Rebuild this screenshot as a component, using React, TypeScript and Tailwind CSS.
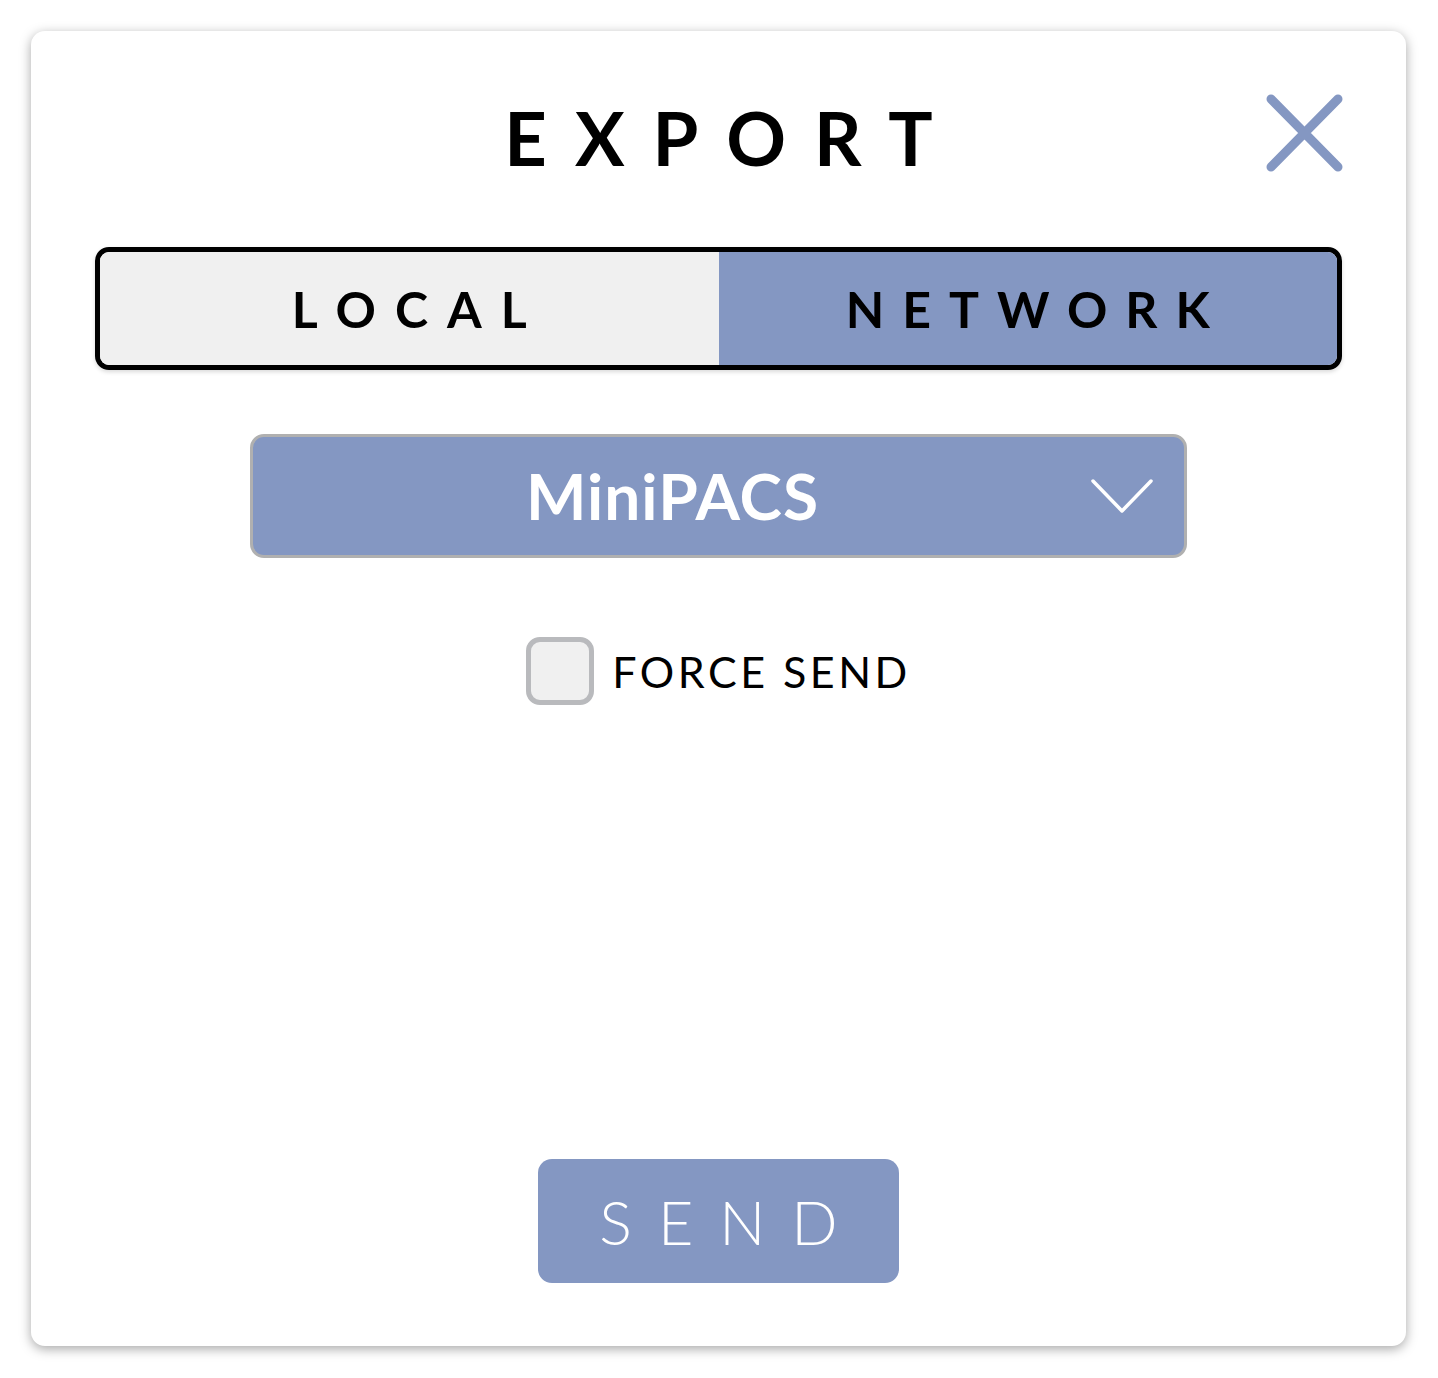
import { useState } from 'react';

const font = { fontFamily: 'Lato, "Noto Sans", sans-serif' };

function CloseIcon() {
  return (
    <svg width="80" height="82" viewBox="0 0 80 82" fill="none">
      <path d="M7 7 L74 75 M74 7 L7 75" stroke="#8497c2" strokeWidth="9" strokeLinecap="round" />
    </svg>
  );
}

function Chevron() {
  return (
    <svg width="62" height="35" viewBox="0 0 62 35" fill="none">
      <path d="M2 2 L31 32 L60 2" stroke="#ffffff" strokeWidth="3.5" strokeLinecap="round" strokeLinejoin="round" />
    </svg>
  );
}

export default function App() {
  const [mode, setMode] = useState<'local' | 'network'>('network');
  const [force, setForce] = useState(false);

  return (
    <div className="min-h-screen w-full bg-white p-[31px]" style={font}>
      <div className="relative flex h-[1315px] w-[1375px] flex-col items-center rounded-[14px] bg-white shadow-[0_3px_12px_rgba(0,0,0,0.35)]">
        {/* Header */}
        <h1 className="mt-[70px] pl-[28px] text-[74px] font-bold leading-none tracking-[28px] text-black">
          EXPORT
        </h1>
        <button className="absolute right-[62px] top-[61px]">
          <CloseIcon />
        </button>

        {/* Local / Network toggle */}
        <div className="mt-[72px] grid h-[123px] w-[1247px] grid-cols-2 overflow-hidden rounded-[14px] border-[5px] border-black shadow-[0_2px_4px_rgba(0,0,0,0.15)]">
          <button
            onClick={() => setMode('local')}
            className={`flex items-center justify-center pl-[19px] text-[50px] font-bold leading-none tracking-[19px] text-black ${mode === 'local' ? 'bg-[#8497c2]' : 'bg-[#f0f0f0]'}`}
          >
            LOCAL
          </button>
          <button
            onClick={() => setMode('network')}
            className={`flex items-center justify-center pl-[18px] text-[50px] font-bold leading-none tracking-[18px] text-black ${mode === 'network' ? 'bg-[#8497c2]' : 'bg-[#f0f0f0]'}`}
          >
            NETWORK
          </button>
        </div>

        {/* Destination select */}
        <div className="relative mt-[64px] flex h-[124px] w-[937px] items-center justify-center rounded-[14px] border-[3px] border-[#b0b0b0] bg-[#8497c2] pr-[92px]">
          <span className="text-[64px] font-bold leading-none tracking-[1px] text-white">MiniPACS</span>
          <span className="absolute right-[31px] top-[42px]">
            <Chevron />
          </span>
        </div>

        {/* Force send */}
        <label className="mt-[79px] flex cursor-pointer items-center gap-[18px]">
          <span
            onClick={() => setForce(!force)}
            className="h-[68px] w-[68px] rounded-[14px] border-[5px] border-[#b9babd] bg-[#f0f0f0]"
          />
          <span className="text-[43px] leading-none tracking-[3.5px] text-black">FORCE SEND</span>
        </label>

        {/* Send */}
        <button className="mt-auto mb-[63px] flex h-[124px] w-[361px] items-center justify-center rounded-[14px] bg-[#8497c2] pl-[26px] text-[61px] font-light leading-none tracking-[26px] text-white">
          SEND
        </button>
      </div>
    </div>
  );
}
